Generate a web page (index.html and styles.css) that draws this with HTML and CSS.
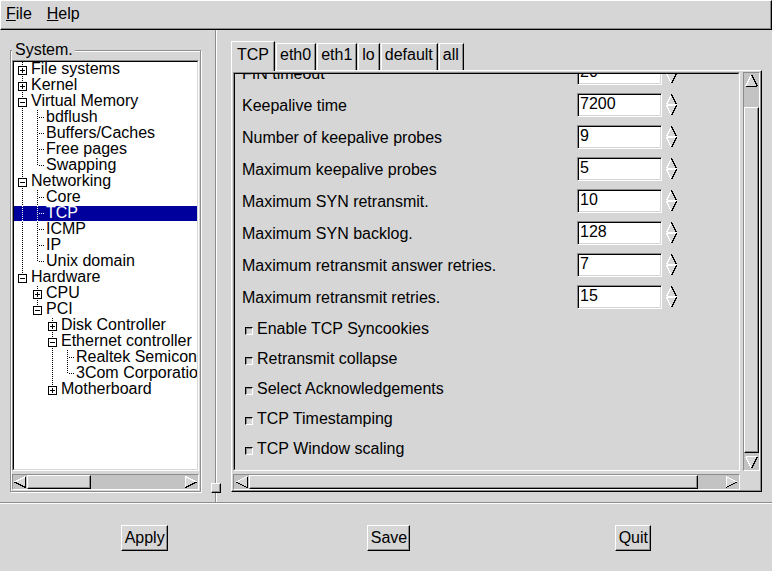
FILE: index.html
```html
<!DOCTYPE html>
<html>
<head>
<meta charset="utf-8">
<title>System</title>
<link rel="stylesheet" href="styles.css">
</head>
<body>
<svg class="defs" width="0" height="0" aria-hidden="true">
  <defs>
    <symbol id="a-left" viewBox="0 0 14 14">
      <polygon points="1.5,7 12.5,1.5 12.5,12.5" fill="#d6d6d6"/>
      <line x1="1.5" y1="7" x2="12.5" y2="1.5" stroke="#fff"/>
      <line x1="12.5" y1="1.5" x2="12.5" y2="12.5" stroke="#000"/>
      <line x1="12.5" y1="12.5" x2="1.5" y2="7" stroke="#000"/>
    </symbol>
    <symbol id="a-right" viewBox="0 0 14 14">
      <polygon points="12.5,7 1.5,1.5 1.5,12.5" fill="#d6d6d6"/>
      <line x1="1.5" y1="1.5" x2="1.5" y2="12.5" stroke="#fff"/>
      <line x1="1.5" y1="1.5" x2="12.5" y2="7" stroke="#fff"/>
      <line x1="12.5" y1="7" x2="1.5" y2="12.5" stroke="#000"/>
    </symbol>
    <symbol id="a-up" viewBox="0 0 14 14">
      <polygon points="7,1.5 1.5,12.5 12.5,12.5" fill="#d6d6d6"/>
      <line x1="7" y1="1.5" x2="1.5" y2="12.5" stroke="#fff"/>
      <line x1="7" y1="1.5" x2="12.5" y2="12.5" stroke="#000"/>
      <line x1="1.5" y1="12.5" x2="12.5" y2="12.5" stroke="#000"/>
    </symbol>
    <symbol id="a-down" viewBox="0 0 14 14">
      <polygon points="1.5,1.5 12.5,1.5 7,12.5" fill="#d6d6d6"/>
      <line x1="1.5" y1="1.5" x2="12.5" y2="1.5" stroke="#fff"/>
      <line x1="1.5" y1="1.5" x2="7" y2="12.5" stroke="#fff"/>
      <line x1="12.5" y1="1.5" x2="7" y2="12.5" stroke="#000"/>
    </symbol>
    <symbol id="spin" viewBox="0 0 12 24">
      <line x1="5.5" y1="1.5" x2="0.5" y2="11.5" stroke="#fff"/>
      <line x1="5.5" y1="1.5" x2="10.5" y2="11.5" stroke="#000"/>
      <line x1="0.5" y1="11.5" x2="10.5" y2="11.5" stroke="#fff"/>
      <line x1="0.5" y1="12.5" x2="10.5" y2="12.5" stroke="#fff"/>
      <line x1="0.5" y1="12.5" x2="5.5" y2="22.5" stroke="#fff"/>
      <line x1="10.5" y1="12.5" x2="5.5" y2="22.5" stroke="#000"/>
    </symbol>
  </defs>
</svg>

<div class="menubar">
  <span class="menu"><span class="u">F</span>ile</span>
  <span class="menu"><span class="u">H</span>elp</span>
</div>

<div class="main">
  <div class="left">
    <fieldset class="frame">
      <legend>System.</legend>
      <div class="sunken tree-box">
        <div class="sunken-in tree">
          <div class="row"><span class="g v"><span class="box plus"></span></span><span class="tx">File systems</span></div>
          <div class="row"><span class="g v"><span class="box plus"></span></span><span class="tx">Kernel</span></div>
          <div class="row"><span class="g v"><span class="box"></span></span><span class="tx">Virtual Memory</span></div>
          <div class="row"><span class="g v"></span><span class="g t"></span><span class="tx">bdflush</span></div>
          <div class="row"><span class="g v"></span><span class="g t"></span><span class="tx">Buffers/Caches</span></div>
          <div class="row"><span class="g v"></span><span class="g t"></span><span class="tx">Free pages</span></div>
          <div class="row"><span class="g v"></span><span class="g l"></span><span class="tx">Swapping</span></div>
          <div class="row"><span class="g v"><span class="box"></span></span><span class="tx">Networking</span></div>
          <div class="row"><span class="g v"></span><span class="g t"></span><span class="tx">Core</span></div>
          <div class="row sel"><span class="g v"></span><span class="g t"></span><span class="tx">TCP</span></div>
          <div class="row"><span class="g v"></span><span class="g t"></span><span class="tx">ICMP</span></div>
          <div class="row"><span class="g v"></span><span class="g t"></span><span class="tx">IP</span></div>
          <div class="row"><span class="g v"></span><span class="g l"></span><span class="tx">Unix domain</span></div>
          <div class="row"><span class="g h"><span class="box"></span></span><span class="tx">Hardware</span></div>
          <div class="row"><span class="g"></span><span class="g v"><span class="box plus"></span></span><span class="tx">CPU</span></div>
          <div class="row"><span class="g"></span><span class="g h"><span class="box"></span></span><span class="tx">PCI</span></div>
          <div class="row"><span class="g"></span><span class="g"></span><span class="g v"><span class="box plus"></span></span><span class="tx">Disk Controller</span></div>
          <div class="row"><span class="g"></span><span class="g"></span><span class="g v"><span class="box"></span></span><span class="tx">Ethernet controller</span></div>
          <div class="row"><span class="g"></span><span class="g"></span><span class="g v"></span><span class="g t"></span><span class="tx">Realtek Semiconductor</span></div>
          <div class="row"><span class="g"></span><span class="g"></span><span class="g v"></span><span class="g l"></span><span class="tx">3Com Corporation</span></div>
          <div class="row"><span class="g"></span><span class="g"></span><span class="g h"><span class="box plus"></span></span><span class="tx">Motherboard</span></div>
        </div>
      </div>
      <div class="hscroll small">
        <svg class="arr"><use href="#a-left"/></svg>
        <div class="thumb hthumb-left"></div>
        <div class="trough"></div>
        <svg class="arr"><use href="#a-right"/></svg>
      </div>
    </fieldset>
  </div>

  <div class="handle"><div class="grip"></div></div>

  <div class="right">
    <div class="tabs">
      <span class="tab active">TCP</span>
      <span class="tab">eth0</span>
      <span class="tab">eth1</span>
      <span class="tab">lo</span>
      <span class="tab">default</span>
      <span class="tab">all</span>
    </div>
    <div class="page">
      <div class="sunken view">
        <div class="sunken-in viewin">
          <div class="form">
            <div class="srow"><span class="lbl">FIN timeout</span><span class="entry">20</span><svg class="spin"><use href="#spin"/></svg></div>
            <div class="srow"><span class="lbl">Keepalive time</span><span class="entry">7200</span><svg class="spin"><use href="#spin"/></svg></div>
            <div class="srow"><span class="lbl">Number of keepalive probes</span><span class="entry">9</span><svg class="spin"><use href="#spin"/></svg></div>
            <div class="srow"><span class="lbl">Maximum keepalive probes</span><span class="entry">5</span><svg class="spin"><use href="#spin"/></svg></div>
            <div class="srow"><span class="lbl">Maximum SYN retransmit.</span><span class="entry">10</span><svg class="spin"><use href="#spin"/></svg></div>
            <div class="srow"><span class="lbl">Maximum SYN backlog.</span><span class="entry">128</span><svg class="spin"><use href="#spin"/></svg></div>
            <div class="srow"><span class="lbl">Maximum retransmit answer retries.</span><span class="entry">7</span><svg class="spin"><use href="#spin"/></svg></div>
            <div class="srow"><span class="lbl">Maximum retransmit retries.</span><span class="entry">15</span><svg class="spin"><use href="#spin"/></svg></div>
            <div class="check"><span class="cb"></span><span class="ct">Enable TCP Syncookies</span></div>
            <div class="check"><span class="cb"></span><span class="ct">Retransmit collapse</span></div>
            <div class="check"><span class="cb"></span><span class="ct">Select Acknowledgements</span></div>
            <div class="check"><span class="cb"></span><span class="ct">TCP Timestamping</span></div>
            <div class="check"><span class="cb"></span><span class="ct">TCP Window scaling</span></div>
          </div>
        </div>
      </div>
      <div class="vscroll">
        <svg class="varr"><use href="#a-up"/></svg>
        <div class="vtrough-top"></div>
        <div class="thumb vthumb"></div>
        <div class="trough"></div>
        <svg class="varr"><use href="#a-down"/></svg>
      </div>
      <div class="hscroll wide">
        <svg class="arr"><use href="#a-left"/></svg>
        <div class="thumb hthumb-right"></div>
        <div class="trough"></div>
        <svg class="arr"><use href="#a-right"/></svg>
      </div>
    </div>
  </div>
</div>

<div class="sep"></div>

<div class="buttons">
  <button class="btn">Apply</button>
  <button class="btn">Save</button>
  <button class="btn">Quit</button>
</div>
</body>
</html>
```

FILE: styles.css
```css
* { box-sizing: border-box; }
html, body { margin: 0; padding: 0; }
body {
  width: 772px;
  height: 571px;
  overflow: hidden;
  background: #d6d6d6;
  color: #000;
  font-family: "Liberation Sans", Arial, sans-serif;
  font-size: 16px;
}
.defs { position: absolute; width: 0; height: 0; overflow: hidden; }

/* menu bar */
.menubar {
  height: 30px;
  display: flex;
  gap: 15px;
  padding: 4px 0 0 5px;
  line-height: 18px;
  border: 1px solid;
  border-color: #fff #000 #000 #fff;
  box-shadow: inset -1px -1px 0 #8c8c8c;
}
.menubar .u { text-decoration: underline; }

/* main area */
.main { display: flex; height: 472px; }
.left { width: 210px; flex: none; padding: 12px 9px 10px 10px; }

.frame {
  margin: 0;
  min-width: 0;
  width: 191px;
  padding: 2px 1px 1px 1px;
  border: 1px solid #8c8c8c;
  box-shadow: inset 1px 1px 0 #fff, 1px 1px 0 #fff;
}
.frame legend {
  padding: 0 2px 0 3px;
  line-height: 16px;
  background: #d6d6d6;
}

.sunken {
  border: 1px solid;
  border-color: #8c8c8c #fff #fff #8c8c8c;
}
.sunken-in {
  height: 100%;
  border: 1px solid;
  border-color: #000 #d6d6d6 #d6d6d6 #000;
  overflow: hidden;
}

.tree-box { height: 411px; }
.tree { background: #fff; }

.row {
  display: flex;
  align-items: flex-start;
  height: 16px;
  white-space: nowrap;
}
.row.sel {
  background: linear-gradient(#00009c, #00009c) no-repeat 0 0 / 100% 15px;
  color: #fff;
}
.tx { line-height: 14px; margin-left: 2px; }

.g {
  flex: none;
  width: 15px;
  height: 16px;
  padding: 4px 0 0 4px;
  background-repeat: no-repeat;
}
.g.v {
  background-image: repeating-linear-gradient(to bottom, currentColor 0 1px, transparent 1px 2px);
  background-size: 1px 16px;
  background-position: 8px 0;
}
.g.h {
  background-image: repeating-linear-gradient(to bottom, currentColor 0 1px, transparent 1px 2px);
  background-size: 1px 8px;
  background-position: 8px 0;
}
.g.t {
  background-image:
    repeating-linear-gradient(to bottom, currentColor 0 1px, transparent 1px 2px),
    repeating-linear-gradient(to right, currentColor 0 1px, transparent 1px 2px);
  background-size: 1px 16px, 6px 1px;
  background-position: 8px 0, 10px 7px;
}
.g.l {
  background-image:
    repeating-linear-gradient(to bottom, currentColor 0 1px, transparent 1px 2px),
    repeating-linear-gradient(to right, currentColor 0 1px, transparent 1px 2px);
  background-size: 1px 8px, 6px 1px;
  background-position: 8px 0, 10px 7px;
}
.box {
  display: block;
  width: 9px;
  height: 9px;
  border: 1px solid #000;
  background: #fff linear-gradient(#000, #000) no-repeat 1px 3px / 5px 1px;
}
.box.plus {
  background:
    linear-gradient(#000, #000) no-repeat 1px 3px / 5px 1px,
    linear-gradient(#000, #000) no-repeat 3px 1px / 1px 5px,
    #fff;
}

/* scrollbars */
.hscroll {
  display: flex;
  height: 16px;
  background: #c3c3c3;
  border: 1px solid;
  border-color: #8c8c8c #fff #fff #8c8c8c;
}
.hscroll.small { margin-top: 3px; }
.arr { flex: none; width: 14px; height: 14px; display: block; shape-rendering: crispEdges; }
.wide .arr { width: 15px; }
.trough { flex: 1; }
.thumb {
  flex: none;
  background: #d6d6d6;
  border: 1px solid;
  border-color: #fff #000 #000 #fff;
  box-shadow: inset -1px -1px 0 #8c8c8c;
}
.hthumb-left { width: 64px; }
.hthumb-right { width: 449px; }

.vscroll {
  display: flex;
  flex-direction: column;
  background: #c3c3c3;
  border: 1px solid;
  border-color: #8c8c8c #fff #fff #8c8c8c;
}
.varr { flex: none; width: 15px; height: 15px; display: block; shape-rendering: crispEdges; }
.vtrough-top { flex: none; height: 19px; }
.vthumb { height: 346px; }

/* paned handle */
.handle {
  width: 11px;
  flex: none;
  display: flex;
  flex-direction: column;
  justify-content: flex-end;
  align-items: flex-end;
  padding-bottom: 9px;
  background: linear-gradient(to right, transparent 5px, #8c8c8c 5px 6px, #fff 6px 7px, transparent 7px);
}
.grip {
  width: 10px;
  height: 10px;
  background: #d6d6d6;
  border: 1px solid;
  border-color: #fff #000 #000 #fff;
  box-shadow: inset -1px -1px 0 #8c8c8c;
}

/* notebook */
.right { flex: 1; padding: 11px 10px 10px 10px; display: flex; flex-direction: column; }
.tabs { display: flex; align-items: flex-end; gap: 1px; height: 29px; flex: none; }
.tab {
  height: 27px;
  padding: 2px 4px 0 3px;
  line-height: 18px;
  background: #d6d6d6;
  border-top: 1px solid #fff;
  border-left: 1px solid #fff;
  border-right: 1px solid #000;
  box-shadow: inset -1px 0 0 #8c8c8c;
}
.tab.active {
  height: 30px;
  padding: 4px 5px 0 5px;
  margin-bottom: -1px;
  position: relative;
  z-index: 1;
}
.page {
  flex: 1;
  display: grid;
  grid-template-columns: 507px 17px;
  grid-template-rows: 399px 16px;
  gap: 3px;
  padding: 1px;
  border: 1px solid;
  border-color: #fff #000 #000 #fff;
  box-shadow: inset -1px -1px 0 #8c8c8c;
}
.view { height: 399px; }
.viewin { background: #d6d6d6; }
.form { margin-top: -17px; padding-left: 7px; }

.srow {
  display: grid;
  grid-template-columns: 331px 85px 12px;
  column-gap: 4px;
  align-items: center;
  height: 32px;
}
.lbl { line-height: 18px; padding-top: 2px; white-space: nowrap; }
.entry {
  height: 24px;
  padding: 0 0 0 2px;
  line-height: 20px;
  background: #fff;
  border: 1px solid;
  border-color: #8c8c8c #fff #fff #8c8c8c;
  box-shadow: inset 1px 1px 0 #000, inset -1px -1px 0 #d6d6d6;
}
.spin { width: 12px; height: 24px; display: block; shape-rendering: crispEdges; }

.check { display: flex; align-items: flex-start; height: 30px; padding-left: 3px; }
.cb {
  flex: none;
  width: 8px;
  height: 8px;
  margin-top: 14px;
  margin-right: 4px;
  background: #d6d6d6;
  border: 1px solid;
  border-color: #000 #fff #fff #000;
  box-shadow: inset 1px 1px 0 #8c8c8c;
}
.ct { line-height: 18px; padding-top: 7px; white-space: nowrap; }

/* bottom */
.sep { height: 2px; border-top: 1px solid #8c8c8c; border-bottom: 1px solid #fff; }
.buttons {
  height: 67px;
  display: grid;
  grid-template-columns: repeat(3, 1fr);
  align-items: center;
  justify-items: center;
  padding: 0 17px 0 22px;
}
.btn {
  font: inherit;
  color: #000;
  margin: 0;
  padding: 3px 2px 3px 3px;
  line-height: 18px;
  background: #d6d6d6;
  border: 1px solid;
  border-color: #fff #000 #000 #fff;
  box-shadow: inset -1px -1px 0 #8c8c8c;
  border-radius: 0;
}
```
